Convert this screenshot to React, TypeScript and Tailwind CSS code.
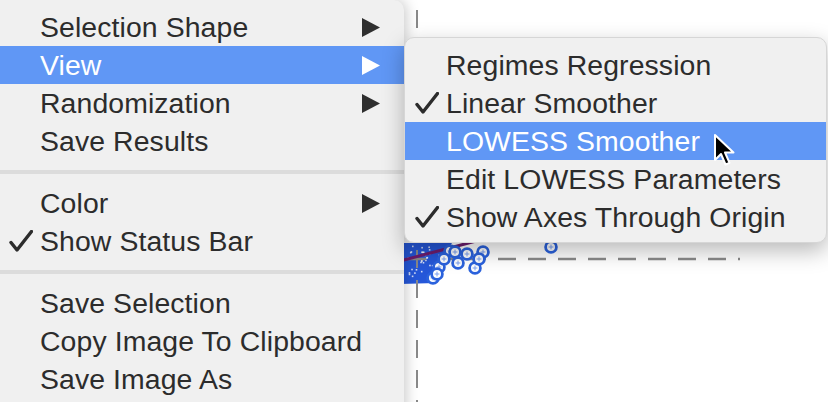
import React from "react";

type Item = { label: string; checked?: boolean; arrow?: boolean; active?: boolean };

const Check = ({ color }: { color: string }) => (
  <svg width="24" height="22" viewBox="0 0 24 22" className="block">
    <path d="M2 12.5 L8 20 L22.5 1.5" fill="none" stroke={color} strokeWidth="3.4" strokeLinecap="round" strokeLinejoin="round" />
  </svg>
);

const Tri = ({ color }: { color: string }) => (
  <svg width="18" height="19" viewBox="0 0 18 19" className="block">
    <polygon points="0,0 18,9.5 0,19" fill={color} />
  </svg>
);

function Row({ item, gutterPad }: { item: Item; gutterPad: string }) {
  const fg = item.active ? "#ffffff" : "#2c2c2c";
  return (
    <div
      className={`flex h-[38px] items-center ${gutterPad} pr-[24px] ${
        item.active ? "bg-[#6097f5] text-white" : "text-[#2c2c2c]"
      }`}
    >
      <div className="flex w-[31px] shrink-0 items-center">{item.checked ? <Check color={fg} /> : null}</div>
      <div className="flex-1 whitespace-nowrap text-[28.4px] leading-[38px] tracking-[0.1px]">{item.label}</div>
      {item.arrow ? <Tri color={item.active ? "#ffffff" : "#2f2f2f"} /> : null}
    </div>
  );
}

const Sep = () => (
  <div className="flex h-[24px] items-center">
    <div className="h-[4px] w-full bg-[#dcdcdc]" />
  </div>
);

const plusCircles: [number, number][] = [
  [439, 267],
  [458, 263],
  [467, 254],
  [475, 268],
  [483, 252],
  [479, 259],
  [433, 278],
  [450, 251],
  [455, 252],
  [551, 247],
  [444, 259],
  [437, 274],
];

function rand(seed: number) {
  let s = seed;
  return () => {
    s = (s * 9301 + 49297) % 233280;
    return s / 233280;
  };
}

function Plot() {
  const r = rand(7);
  const specks: [number, number][] = [];
  for (let i = 0; i < 34; i++) {
    specks.push([406 + r() * 34, 244 + r() * 32]);
  }
  return (
    <svg width="828" height="402" viewBox="0 0 828 402" className="block">
      <rect width="828" height="402" fill="#ffffff" />
      {/* dense cluster */}
      <path d="M400 243 L452 243 L446 252 L443 264 L441 276 L436 283 L400 284 Z" fill="#2557d9" />
      {specks.map(([x, y], i) => (
        <rect key={i} x={x} y={y} width="1.6" height="1.6" fill="#ffffff" opacity="0.8" />
      ))}
      {/* axes through origin */}
      <line x1="417" y1="0" x2="417" y2="402" stroke="#8a8a8a" strokeWidth="2" strokeDasharray="18 12" strokeDashoffset="-10" />
      <line x1="404" y1="259" x2="740" y2="259" stroke="#8a8a8a" strokeWidth="2.5" strokeDasharray="18 12" strokeDashoffset="-4" />
      {/* linear smoother */}
      <line x1="400" y1="261" x2="480" y2="240" stroke="#6e1d6e" strokeWidth="3" />
      {plusCircles.map(([x, y], i) => (
        <g key={i}>
          <circle cx={x} cy={y} r="5.4" fill="#ffffff" stroke="#2b62dd" strokeWidth="2.8" />
          <line x1={x - 2.4} y1={y} x2={x + 2.4} y2={y} stroke="#7a9ff0" strokeWidth="1" />
          <line x1={x} y1={y - 2.4} x2={x} y2={y + 2.4} stroke="#7a9ff0" strokeWidth="1" />
        </g>
      ))}
    </svg>
  );
}

export default function App() {
  const main1: Item[] = [
    { label: "Selection Shape", arrow: true },
    { label: "View", arrow: true, active: true },
    { label: "Randomization", arrow: true },
    { label: "Save Results" },
  ];
  const main2: Item[] = [{ label: "Color", arrow: true }, { label: "Show Status Bar", checked: true }];
  const main3: Item[] = [
    { label: "Save Selection" },
    { label: "Copy Image To Clipboard" },
    { label: "Save Image As" },
  ];
  const sub: Item[] = [
    { label: "Regimes Regression" },
    { label: "Linear Smoother", checked: true },
    { label: "LOWESS Smoother", active: true },
    { label: "Edit LOWESS Parameters" },
    { label: "Show Axes Through Origin", checked: true },
  ];
  return (
    <div
      className="relative h-[402px] w-[828px] overflow-hidden bg-white"
      style={{ fontFamily: '"Liberation Sans", Arial, sans-serif' }}
    >
      <div className="absolute inset-0">
        <Plot />
      </div>

      {/* main context menu */}
      <div className="absolute left-0 top-0 z-10 h-[420px] w-[404px] rounded-tr-[10px] bg-[#f0f0f0] pt-[8px] shadow-[2px_0_14px_rgba(0,0,0,0.22)]">
        {main1.map((it) => (
          <Row key={it.label} item={it} gutterPad="pl-[9px]" />
        ))}
        <Sep />
        {main2.map((it) => (
          <Row key={it.label} item={it} gutterPad="pl-[9px]" />
        ))}
        <Sep />
        {main3.map((it) => (
          <Row key={it.label} item={it} gutterPad="pl-[9px]" />
        ))}
      </div>

      {/* submenu */}
      <div className="absolute left-[404px] top-[37px] z-20 w-[423px] overflow-hidden rounded-[10px] border border-[#d6d6d6] bg-[#f0f0f0] pb-[6px] pt-[8px] shadow-[0_8px_22px_rgba(0,0,0,0.28)]">
        {sub.map((it) => (
          <Row key={it.label} item={it} gutterPad="pl-[10px]" />
        ))}
      </div>

      {/* mouse cursor */}
      <svg
        width="26"
        height="36"
        viewBox="0 0 26 36"
        className="absolute left-[713px] top-[133px] z-30 block"
      >
        <path
          d="M2 2 L2 27 L8 21 L12.5 31.5 L16.5 29.8 L12 19.5 L20.5 19.5 Z"
          fill="#000000"
          stroke="#ffffff"
          strokeWidth="2"
          strokeLinejoin="round"
        />
      </svg>
    </div>
  );
}
